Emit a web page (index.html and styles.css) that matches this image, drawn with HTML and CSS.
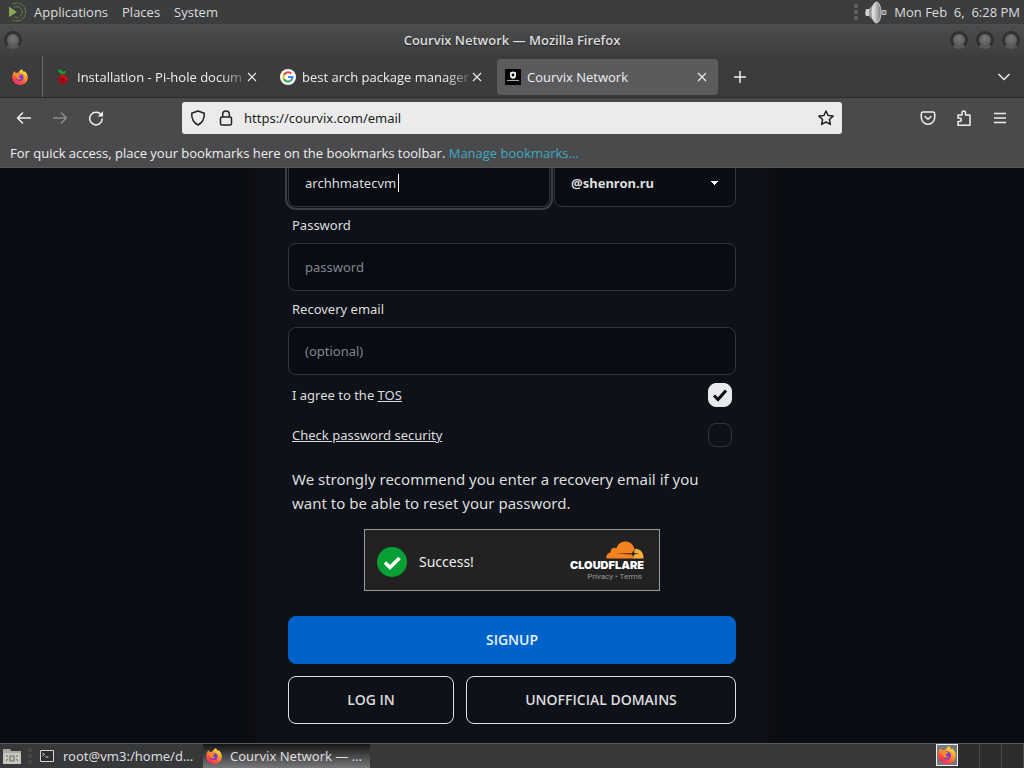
FILE: index.html
```html
<!DOCTYPE html>
<html lang="en">
<head>
    <meta charset="UTF-8">
    <meta name="viewport" content="width=device-width, initial-scale=1.0">
    <title>Courvix Network</title>
    <link rel="stylesheet" href="styles.css">
</head>
<body>
    <!-- shared icons -->
    <svg class="defs" width="0" height="0" aria-hidden="true">
        <defs>
            <linearGradient id="ffBody" x1="0.8" y1="0" x2="0.2" y2="1">
                <stop offset="0" stop-color="#fff04a"/>
                <stop offset="0.4" stop-color="#ff9a2a"/>
                <stop offset="0.75" stop-color="#ff4545"/>
                <stop offset="1" stop-color="#e22873"/>
            </linearGradient>
            <symbol id="firefox" viewBox="0 0 16 16">
                <path fill="url(#ffBody)" d="M1.600 3.200C2 2.600 2.600 2.200 2.700 1.900c.1 1 .5 1.500 1 2 .9-.3 1.900-.3 2.700 0C7 2.200 8.600.8 10.200.1c-.1 1.200.6 1.900 1.900 2.900.3-.3.3-.6.200-.9 2 1.400 3.600 4 3.500 6.600C15.600 13 12.200 16 8 16S.3 12.800.2 8.500C.2 6.500.7 4.700 1.600 3.200z"/>
                <circle cx="7.800" cy="8.400" r="3.700" fill="#7a3fc8"/>
                <path fill="#ff8a26" d="M3.700 4.200c1.200-.4 2.700.1 3.500 1.200.7.100 1.500.1 2 .2 0 1-1.900 1.300-2.300 2.200 0 1.200 1 2 2.600 1.300-1.100 2-4.300 1.900-5.200-.5-.7-1.600-.5-3.100-.6-4.400z"/>
            </symbol>
            <symbol id="close" viewBox="0 0 10 10">
                <path d="M1 1l8 8M9 1L1 9" fill="none" stroke="currentColor" stroke-width="1.100"/>
            </symbol>
        </defs>
    </svg>

    <header class="panel">
        <svg class="mate" viewBox="0 0 20 20" aria-hidden="true">
            <path d="M2 4.500L10 10l-8 5z" fill="#87a752"/>
            <path d="M5 2.300A9 9 0 1 1 5 17.700" fill="none" stroke="#6d8548" stroke-dasharray="6 1"/>
            <path d="M7 5.200a5.500 5.500 0 1 1 0 9.600" fill="none" stroke="#6d8548" stroke-dasharray="8 1"/>
        </svg>
        <nav class="menus">
            <a href="#">Applications</a>
            <a href="#">Places</a>
            <a href="#">System</a>
        </nav>
        <span class="grip"></span>
        <svg class="speaker" viewBox="0 0 24 24" aria-hidden="true">
            <defs>
                <linearGradient id="cone"><stop offset="0" stop-color="#f2f2f2"/><stop offset="1" stop-color="#777"/></linearGradient>
            </defs>
            <path d="M2 9h4v7H2q-1.500-3.500 0-7z" fill="#d0d0d0"/>
            <path d="M5 9l7-7v21l-7-7z" fill="#9a9a9a"/>
            <path d="M18 10.500h4v4h-4z" fill="#777" stroke="#bbb"/>
            <ellipse cx="12.500" cy="12.500" rx="4.500" ry="10.500" fill="url(#cone)" stroke="#ddd" stroke-width="0.800"/>
        </svg>
        <time>Mon Feb&nbsp; 6,&nbsp; 6:28 PM</time>
    </header>

    <div class="titlebar">
        <button class="orb" aria-label="Window menu"></button>
        <h1>Courvix Network — Mozilla Firefox</h1>
        <div class="orbs">
            <button class="orb" aria-label="Minimize"></button>
            <button class="orb" aria-label="Maximize"></button>
            <button class="orb" aria-label="Close"></button>
        </div>
    </div>

    <div class="tabs">
        <div class="pinned">
            <svg class="fav" aria-hidden="true"><use href="#firefox"/></svg>
        </div>
        <div class="tab">
            <svg class="fav" viewBox="0 0 16 16" aria-hidden="true">
                <path d="M8 5C5 5 3.200 3 3 .500 5.700.300 7.500 1.500 8 3.700c.3-1.300 1.300-2 2.700-2C10.700 3.500 9.800 4.800 8 5z" fill="#19a52b"/>
                <circle cx="8" cy="7.800" r="2.500" fill="#d0121b"/>
                <circle cx="5.300" cy="10.400" r="2.500" fill="#a50d15"/>
                <circle cx="10.700" cy="10.400" r="2.500" fill="#c10f18"/>
                <circle cx="8" cy="13.200" r="2.500" fill="#a50d15"/>
                <circle cx="8" cy="10.500" r="2" fill="#8e0b12"/>
            </svg>
            <span class="name fade">Installation - Pi-hole docum</span>
            <button class="x" aria-label="Close tab"><svg><use href="#close"/></svg></button>
        </div>
        <div class="tab">
            <svg class="fav" viewBox="0 0 16 16" aria-hidden="true">
                <circle cx="8" cy="8" r="8" fill="#fff"/>
                <g fill="none" stroke-width="2">
                    <path d="M11.200 4.600A4.600 4.600 0 0 0 3.900 6" stroke="#ea4335"/>
                    <path d="M3.900 6a4.600 4.600 0 0 0 0 4" stroke="#fbbc05"/>
                    <path d="M3.900 10a4.600 4.600 0 0 0 7 1.500" stroke="#34a853"/>
                    <path d="M10.900 11.500A4.600 4.600 0 0 0 12.500 8H8" stroke="#4285f4"/>
                </g>
            </svg>
            <span class="name fade">best arch package manager</span>
            <button class="x" aria-label="Close tab"><svg><use href="#close"/></svg></button>
        </div>
        <div class="tab active">
            <svg class="fav" viewBox="0 0 16 16" aria-hidden="true">
                <path d="M0 0h16v16H0z" fill="#050507"/>
                <path d="M5 3.500L8 2.500l3 1v3.500c0 1.500-1.500 2.500-3 3-1.500-.5-3-1.500-3-3z" fill="#eee"/>
                <circle cx="8" cy="6" r="1.400" fill="#050507"/>
                <path d="M2 11.500h12" stroke="#aaa"/>
            </svg>
            <span class="name">Courvix Network</span>
            <button class="x" aria-label="Close tab"><svg><use href="#close"/></svg></button>
        </div>
        <button class="tool" aria-label="New tab"><svg viewBox="0 0 16 16"><path d="M8 2v12M2 8h12"/></svg></button>
        <button class="tool last" aria-label="List all tabs"><svg viewBox="0 0 16 16"><path d="M2.500 5L8 10.500 13.500 5"/></svg></button>
    </div>

    <div class="toolbar">
        <button class="tool" aria-label="Back"><svg viewBox="0 0 16 16"><path d="M15 8H1.500M7 2.500L1.500 8 7 13.500"/></svg></button>
        <button class="tool off" aria-label="Forward"><svg viewBox="0 0 16 16"><path d="M1 8h13.500M9 2.500L14.500 8 9 13.500"/></svg></button>
        <button class="tool" aria-label="Reload"><svg viewBox="0 0 16 16"><path d="M13.500 5.500A6.300 6.300 0 1 0 14.300 8.500"/><path d="M15 1.200v5.300H9.700z" class="solid"/></svg></button>
        <div class="urlbar">
            <svg viewBox="0 0 16 16" aria-hidden="true"><path d="M8 1l6.300 2.300C14.500 8.500 12.500 12.800 8 15 3.500 12.800 1.500 8.500 1.700 3.300z"/></svg>
            <svg viewBox="0 0 16 16" aria-hidden="true"><rect x="2.500" y="7" width="11" height="8" rx="1.500"/><path d="M4.700 7V4.300a3.300 3.300 0 0 1 6.600 0V7"/></svg>
            <input type="text" value="https://courvix.com/email" aria-label="Address">
            <svg viewBox="0 0 16 16" aria-hidden="true"><path d="M8 1l2.100 4.500 5 .6-3.700 3.400 1 4.900L8 12l-4.400 2.400 1-4.900L.9 6.100l5-.6z"/></svg>
        </div>
        <button class="tool" aria-label="Save to Pocket"><svg viewBox="0 0 16 16"><path d="M3 2h10a1.700 1.700 0 0 1 1.700 1.700V7.500a6.700 6.700 0 0 1-13.400 0V3.700A1.700 1.700 0 0 1 3 2z"/><path d="M4.700 6.200L8 9.300l3.300-3.100"/></svg></button>
        <button class="tool" aria-label="Extensions"><svg viewBox="0 0 16 16"><path d="M2 15.200V11.500h1.500a1.700 1.700 0 0 0 0-3.500H2V5h4V2.800a1.700 1.700 0 0 1 3.500 0V5H14v10.200z"/></svg></button>
        <button class="tool" aria-label="Menu"><svg viewBox="0 0 16 16"><path d="M2 3.500h12M2 8h12M2 12.500h12"/></svg></button>
    </div>

    <div class="bookmarks">
        For quick access, place your bookmarks here on the bookmarks toolbar. <a href="#">Manage bookmarks…</a>
    </div>

    <main>
        <form class="card">
            <div class="address">
                <div class="user">
                    <input class="field" type="text" value="archhmatecvm" aria-label="Username">
                    <span class="caret"></span>
                </div>
                <select class="field" aria-label="Domain">
                    <option>@shenron.ru</option>
                </select>
            </div>
            <label class="label" for="password">Password</label>
            <input class="field" id="password" type="password" placeholder="password">
            <label class="label" for="recovery">Recovery email</label>
            <input class="field" id="recovery" type="email" placeholder="(optional)">
            <div class="check">
                <label for="tos">I agree to the <a href="#">TOS</a></label>
                <input type="checkbox" id="tos" checked>
            </div>
            <div class="check">
                <label for="security"><a href="#">Check password security</a></label>
                <input type="checkbox" id="security">
            </div>
            <p>We strongly recommend you enter a recovery email if you want to be able to reset your password.</p>
            <div class="captcha">
                <svg class="success" viewBox="0 0 30 30" aria-hidden="true">
                    <circle cx="15" cy="15" r="15" fill="#08a035"/>
                    <path d="M8 15.500l5 5L22.500 11" fill="none" stroke="#fff" stroke-width="3.600"/>
                </svg>
                <span class="result">Success!</span>
                <div class="brand">
                    <svg class="cloud" viewBox="0 0 38 18" aria-hidden="true">
                        <path d="M.5 17.500C0 14 2 11.500 4.800 11.500 4 8 7.500 5.500 10.500 7.200 12 2.500 15.500.500 19.500.500c4.500 0 8 3 9 7.500l-1 9.500z" fill="#f6821f"/>
                        <path d="M27 17.500l2-9.800c5-.2 8.800 3.500 8.500 9.800z" fill="#fbad41"/>
                        <path d="M9 12.500l17-.3 1.300-2.700.9 2.500 5 .8-5 .6-.9 2.600-1.300-2.600z" fill="#222"/>
                    </svg>
                    <strong>CLOUDFLARE</strong>
                    <span class="legal"><a href="#">Privacy</a> • <a href="#">Terms</a></span>
                </div>
            </div>
            <button class="btn primary" type="submit">SIGNUP</button>
            <div class="actions">
                <button class="btn" type="button">LOG IN</button>
                <button class="btn wide" type="button">UNOFFICIAL DOMAINS</button>
            </div>
        </form>
    </main>

    <footer class="taskbar">
        <svg class="files" viewBox="0 0 20 18" aria-hidden="true">
            <path d="M1 2h7l1 2h10v13H1z" fill="#a9aba0"/>
            <path d="M1 6h18v11H1z" fill="#c4c5bb"/>
            <path d="M8 9h4v5H8zM4 8l2 2M16 8l-2 2M4 14l2-2M16 14l-2-2" fill="none" stroke="#6b6c66"/>
        </svg>
        <span class="grip"></span>
        <button class="task">
            <svg viewBox="0 0 16 16" aria-hidden="true"><path d="M1.500 2.500h13v11h-13z" fill="#2b2d30" stroke="#d4d4d4"/><path d="M3.500 5l2 1.500-2 1.500M6.500 9h3" fill="none" stroke="#ddd"/></svg>
            <span>root@vm3:/home/d…</span>
        </button>
        <button class="task current">
            <svg aria-hidden="true"><use href="#firefox"/></svg>
            <span>Courvix Network — …</span>
        </button>
        <div class="pager">
            <span class="on"><svg aria-hidden="true"><use href="#firefox"/></svg></span>
            <span></span>
            <span></span>
            <span></span>
        </div>
    </footer>
</body>
</html>
```
FILE: styles.css
```css
* {
    margin: 0;
    padding: 0;
    box-sizing: border-box;
}
body {
    display: flex;
    flex-direction: column;
    height: 100vh;
    overflow: hidden;
    background-color: #0a0d14;
    font-family: "Open Sans", "Noto Sans", sans-serif;
    font-size: 13px;
    color: #eee;
}
button, input, select {
    font: inherit;
    color: inherit;
    background: none;
    border: none;
}
svg {
    flex: none;
}
.defs {
    position: absolute;
}

/* top panel */
.panel {
    display: flex;
    align-items: center;
    height: 24px;
    padding: 0 4px 0 7px;
    background-color: #3c3d3e;
    color: #ddd;
}
.mate {
    width: 20px;
    height: 20px;
}
.menus {
    display: flex;
    gap: 14px;
    margin-left: 7px;
    margin-right: auto;
}
.menus a {
    color: inherit;
    text-decoration: none;
}
.grip {
    width: 4px;
    height: 16px;
    background: repeating-linear-gradient(#5c5c5e 0 4px, transparent 4px 6px);
}
.speaker {
    width: 24px;
    height: 24px;
    margin: 0 6px;
}

/* window title */
.titlebar {
    display: flex;
    align-items: center;
    justify-content: space-between;
    height: 32px;
    padding: 0 4px 2px;
    border-top: 1px solid #505153;
    background: linear-gradient(#4b4c4e, #3e3e40);
}
.titlebar h1 {
    flex: 1;
    font-size: 13px;
    font-weight: 600;
    text-align: center;
    color: #ddd;
    text-shadow: 0 1px 1px #222;
}
.titlebar > .orb {
    margin-right: 52px;
}
.orbs {
    display: flex;
    gap: 8px;
}
.orb {
    width: 18px;
    height: 18px;
    border: 3px solid #303132;
    border-bottom-color: #58595a;
    border-radius: 50%;
    background: radial-gradient(circle at 50% 40%, #777, #505152);
}

/* tabs */
.tabs {
    display: flex;
    align-items: center;
    gap: 4px;
    height: 42px;
    padding-right: 2px;
    border-bottom: 1px solid #2a2a2c;
    background-color: #3c3c3e;
}
.pinned {
    display: flex;
    align-items: center;
    justify-content: center;
    width: 43px;
    height: 100%;
    padding-right: 2px;
    border-right: 1px solid #6c6c6e;
}
.fav {
    width: 16px;
    height: 16px;
}
.tab {
    display: flex;
    align-items: center;
    flex: 0 1 221px;
    min-width: 0;
    height: 36px;
    padding: 0 8px;
    border-radius: 4px;
}
.tab.active {
    background-color: #5b5b5e;
}
.name {
    flex: 1;
    margin: 0 0 0 6px;
    white-space: nowrap;
}
.name.fade {
    mask-image: linear-gradient(to right, #000 86%, rgba(0, 0, 0, 0.2));
}
.x {
    display: flex;
    align-items: center;
    justify-content: center;
    width: 16px;
    height: 16px;
}
.x svg {
    width: 10px;
    height: 10px;
}
.tool {
    display: flex;
    align-items: center;
    justify-content: center;
    flex: none;
    width: 36px;
    height: 32px;
}
.tool svg, .urlbar svg {
    width: 16px;
    height: 16px;
    fill: none;
    stroke: currentColor;
    stroke-width: 1.5;
    stroke-linejoin: round;
}
.tool .solid {
    fill: currentColor;
    stroke: none;
}
.tool.off {
    opacity: 0.4;
}
.tool.last {
    margin-left: auto;
}

/* navigation */
.toolbar {
    display: flex;
    align-items: center;
    height: 40px;
    padding: 0 6px;
    background-color: #4a4a4d;
}
.urlbar {
    display: flex;
    align-items: center;
    gap: 12px;
    flex: 1;
    height: 32px;
    margin: 0 68px;
    padding: 0 8px;
    border-radius: 3px;
    background-color: #ebebeb;
    color: #222;
}
.urlbar input {
    flex: 1;
    min-width: 0;
    margin-left: -2px;
    font-family: "Noto Sans", sans-serif;
}
.bookmarks {
    height: 30px;
    padding: 0 10px;
    border-bottom: 1px solid #555558;
    background-color: #4a4a4d;
    line-height: 30px;
    white-space: nowrap;
}
.bookmarks a {
    color: #3fa9c0;
    text-decoration: none;
}

/* page, scrolled to the bottom */
main {
    display: flex;
    flex-direction: column;
    justify-content: flex-end;
    align-items: center;
    flex: 1;
    min-height: 0;
    overflow: hidden;
}
.card {
    display: flex;
    flex-direction: column;
    width: 100%;
    max-width: 512px;
    padding: 32px 32px 19px;
    background-color: #0e1118;
    box-shadow: 0 0 8px 12px #0d0e10;
    font-family: "Noto Sans", sans-serif;
    color: #ddd;
}
.field {
    width: 100%;
    height: 48px;
    padding: 0 16px;
    border: 1px solid #32353b;
    border-radius: 8px;
    background-color: #090c13;
}
.field::placeholder {
    color: #83868c;
}
.address {
    display: flex;
    gap: 4px;
}
.user {
    position: relative;
    flex: 1;
}
.user .field {
    outline: 2px solid #3b3e44;
    outline-offset: 1px;
}
/* text cursor, over the input */
.caret {
    position: absolute;
    left: 110px;
    top: 15px;
    width: 1px;
    height: 18px;
    background-color: #fff;
}
select.field {
    width: 182px;
    appearance: none;
    font-weight: 700;
    background-image: linear-gradient(45deg, transparent 50%, #fff 50%), linear-gradient(135deg, #fff 50%, transparent 50%);
    background-position: calc(100% - 20px) 50%, calc(100% - 16px) 50%;
    background-size: 4px 4px;
    background-repeat: no-repeat;
}
.label {
    padding: 8px 4px;
    line-height: 20px;
}
.check {
    display: flex;
    align-items: center;
    justify-content: space-between;
    height: 40px;
    padding: 0 4px;
}
.check a {
    color: inherit;
}
.check input {
    width: 24px;
    height: 24px;
    appearance: none;
    border: 1px solid #32353b;
    border-radius: 8px;
}
.check input:checked {
    border-color: #e8eaee;
    background: #e8eaee url("data:image/svg+xml,%3Csvg xmlns='http://www.w3.org/2000/svg' viewBox='0 0 22 22'%3E%3Cpath d='M5 11.500l4 4 8-9' fill='none' stroke='%230b0d12' stroke-width='3'/%3E%3C/svg%3E");
}
.card p {
    margin: 12px 4px 14px;
    font-size: 15px;
    line-height: 24px;
}
.captcha {
    display: flex;
    align-items: center;
    align-self: center;
    width: 296px;
    height: 62px;
    margin-bottom: 25px;
    padding: 3px 15px 0 12px;
    border: 1px solid #999;
    background-color: #222;
    color: #eee;
}
.success {
    width: 30px;
    height: 30px;
}
.result {
    margin-left: 12px;
    margin-right: auto;
    font-size: 14px;
    line-height: 20px;
}
.brand {
    display: flex;
    flex-direction: column;
    align-items: flex-end;
}
.cloud {
    width: 38px;
    height: 18px;
}
.brand strong {
    font-family: Inter, sans-serif;
    font-size: 11px;
    font-weight: 900;
    line-height: 12px;
    color: #fff;
}
.legal {
    padding-right: 2px;
    font-family: Roboto, sans-serif;
    font-size: 8px;
    line-height: 12px;
    color: #999;
}
.legal a {
    color: inherit;
    text-decoration: none;
}
.btn {
    flex: 1;
    height: 48px;
    padding-bottom: 2px;
    border: 1px solid #e0e0e4;
    border-radius: 8px;
    font-family: "Open Sans", sans-serif;
    font-size: 14px;
    font-weight: 600;
}
.btn.wide {
    flex: none;
    width: 270px;
}
.btn.primary {
    flex: none;
    border-color: #0063cc;
    background-color: #0063cc;
    color: #e6f2ff;
}
.actions {
    display: flex;
    gap: 12px;
    margin-top: 12px;
}

/* bottom panel */
.taskbar {
    display: flex;
    align-items: center;
    height: 25px;
    padding-left: 2px;
    border-top: 1px solid #5a5b5d;
    background-color: #37383a;
}
.files {
    width: 20px;
    height: 18px;
}
.taskbar .grip {
    margin: 0 4px 0 6px;
    opacity: 0.4;
}
.task {
    display: flex;
    align-items: center;
    gap: 8px;
    flex: 0 1 167px;
    min-width: 0;
    height: 24px;
    padding: 0 3px;
    color: #ddd;
}
.task svg {
    width: 16px;
    height: 16px;
}
.task span {
    font-family: "Noto Sans", sans-serif;
    white-space: nowrap;
}
.task.current {
    background: linear-gradient(#161617, #77787a);
}
.pager {
    display: flex;
    margin-left: auto;
}
.pager span {
    width: 22px;
    height: 24px;
    border-right: 1px solid #484a4c;
    background-color: #2c2d2f;
}
.pager .on {
    height: 22px;
    padding: 1px;
    border: 1px solid #eee;
    background-color: #77787a;
}
.pager svg {
    display: block;
    width: 18px;
    height: 18px;
}
```
